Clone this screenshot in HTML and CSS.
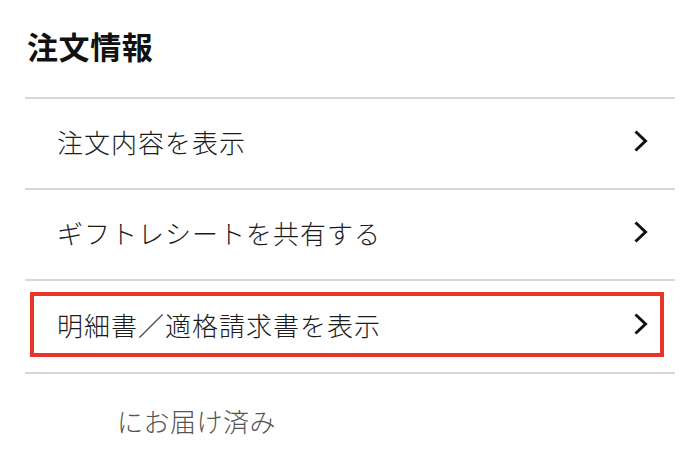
FILE: index.html
```html
<!DOCTYPE html>
<html lang="ja">
<head>
    <meta charset="UTF-8">
    <meta name="viewport" content="width=device-width, initial-scale=1.0">
    <title>注文情報</title>
    <link rel="stylesheet" href="styles.css">
</head>
<body>
    <div class="order-info">
        <!-- Section title -->
        <div class="section-title">注文情報</div>

        <!-- Menu rows -->
        <ul class="menu-list">
            <li class="menu-row">
                <span class="menu-label">注文内容を表示</span>
                <svg class="chevron" viewBox="0 0 15 24"><path d="M2.5 2.5 L12.5 12 L2.5 21.5"/></svg>
            </li>
            <li class="menu-row">
                <span class="menu-label">ギフトレシートを共有する</span>
                <svg class="chevron" viewBox="0 0 15 24"><path d="M2.5 2.5 L12.5 12 L2.5 21.5"/></svg>
            </li>
            <li class="menu-row highlighted">
                <span class="menu-label">明細書／適格請求書を表示</span>
                <svg class="chevron" viewBox="0 0 15 24"><path d="M2.5 2.5 L12.5 12 L2.5 21.5"/></svg>
            </li>
        </ul>

        <!-- Delivery status -->
        <div class="status">にお届け済み</div>
    </div>
</body>
</html>
```

FILE: styles.css
```css
/* Basic layout */
body {
    margin: 0;
    padding: 0;
    background-color: #fff;
    font-family: "Noto Sans CJK JP", "Noto Sans", sans-serif;
    color: #1a1a1a;
}
.order-info {
    padding: 0 25px;
}
/* Title */
.section-title {
    padding: 23px 0 28px 2px;
    font-size: 31px;
    line-height: 46px;
    font-weight: bold;
    letter-spacing: 0.6px;
    color: #111;
    border-bottom: 2px solid #d8d8d8;
}
/* Menu rows */
.menu-list {
    list-style-type: none;
    margin: 0;
    padding: 0;
}
.menu-row {
    position: relative;
    display: flex;
    align-items: center;
    justify-content: space-between;
    min-height: 84px;
    padding: 0 27px 5px 32px;
    border-bottom: 2px solid #d8d8d8;
}
.menu-row.highlighted {
    min-height: 86px;
}
.menu-label {
    font-size: 26px;
    font-weight: 300;
    letter-spacing: 1px;
    color: #1c1c1c;
}
.chevron {
    width: 15px;
    height: 24px;
    fill: none;
    stroke: #111;
    stroke-width: 3;
}
/* Red annotation box */
.highlighted::after {
    content: "";
    position: absolute;
    top: 11px;
    left: 5px;
    right: 11px;
    bottom: 15px;
    border: 4px solid #e8352a;
}
/* Status */
.status {
    padding: 28px 0 0 92px;
    font-size: 26px;
    font-weight: 300;
    letter-spacing: 0.5px;
    color: #555;
}
```
